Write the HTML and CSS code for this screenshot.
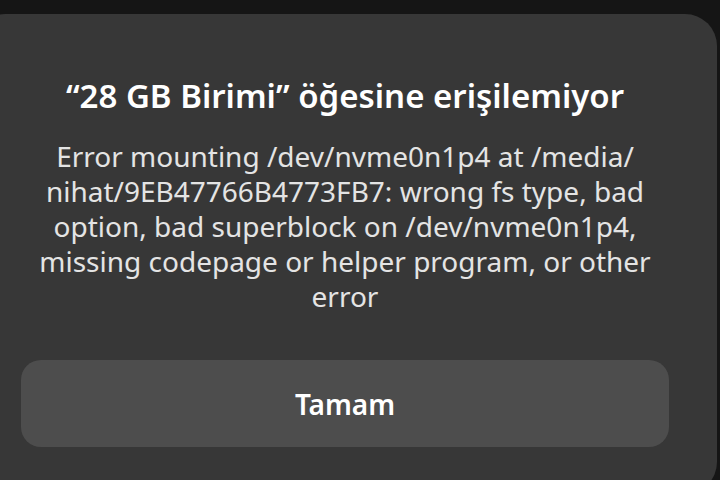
FILE: index.html
```html
<!DOCTYPE html>
<html lang="tr">
<head>
<meta charset="utf-8">
<link rel="stylesheet" href="styles.css">
</head>
<body>
<div class="dialog">
  <div class="content">
    <h1 class="title">“28 GB Birimi” öğesine erişilemiyor</h1>
    <p class="message">Error mounting /dev/nvme0n1p4 at /media/<br>nihat/9EB47766B4773FB7: wrong fs type, bad<br>option, bad superblock on /dev/nvme0n1p4,<br>missing codepage or helper program, or other<br>error</p>
  </div>
  <div class="actions">
    <button class="btn">Tamam</button>
  </div>
</div>
</body>
</html>
```
FILE: styles.css
```css
html, body {
  margin: 0;
  padding: 0;
  height: 100%;
  overflow: hidden;
}
body {
  background: #151515;
  font-family: "Noto Sans", "Open Sans", sans-serif;
  color: #e8e8e8;
}
.dialog {
  margin-top: 14px;
  margin-left: -27px;
  width: 744px;
  height: 480px;
  background: #373737;
  border-radius: 32px;
  box-sizing: border-box;
  padding: 0 48px;
  display: flex;
  flex-direction: column;
}
.content {
  padding-top: 62px;
  text-align: center;
}
.title {
  margin: 0;
  font-size: 33px;
  font-weight: 600;
  line-height: 40px;
  color: #ffffff;
  white-space: nowrap;
}
.message {
  margin: 23px 0 0;
  font-size: 28px;
  line-height: 35px;
  color: #e4e4e4;
  white-space: nowrap;
}
.actions {
  margin-top: 46px;
}
.btn {
  display: block;
  width: 100%;
  height: 87px;
  border: 0;
  border-radius: 20px;
  background: #4d4d4d;
  color: #ffffff;
  font-family: inherit;
  font-size: 28px;
  font-weight: 600;
}
```
